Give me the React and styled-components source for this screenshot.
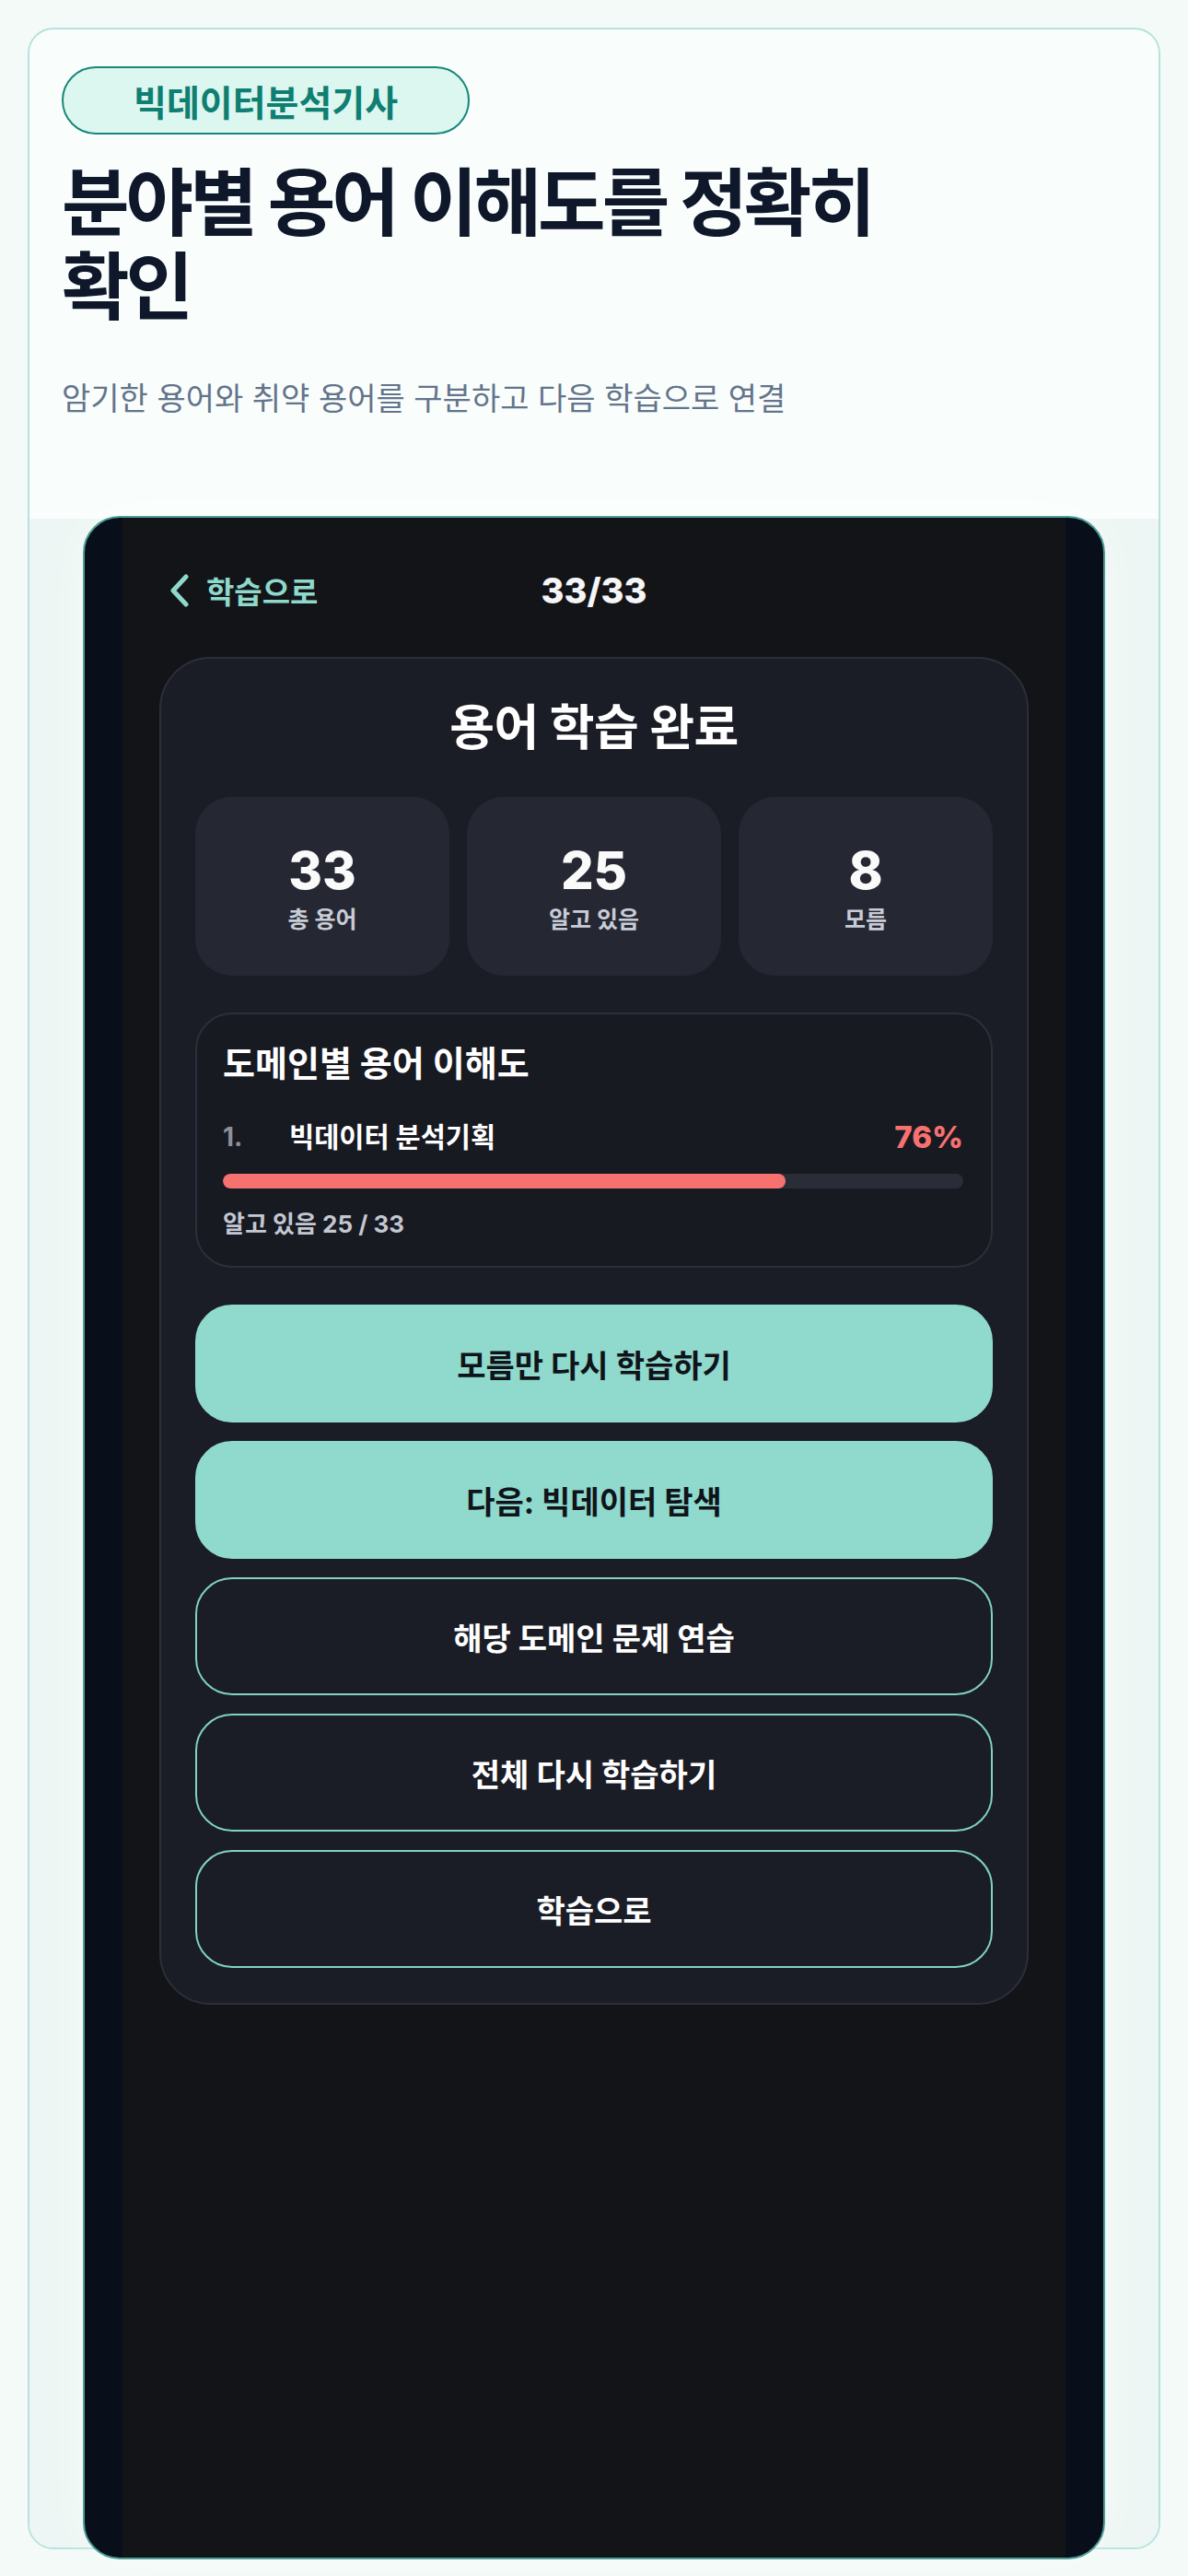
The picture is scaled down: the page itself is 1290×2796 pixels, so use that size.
import React from "react";
import styled, { createGlobalStyle } from "styled-components";

const GlobalStyle = createGlobalStyle`
  * { box-sizing: border-box; }
  html, body { margin: 0; padding: 0; background: #f3faf8; }
  body {
    font-family: Inter, "Noto Sans CJK KR", "Noto Sans", sans-serif;
    -webkit-font-smoothing: antialiased;
  }
`;

const Page = styled.div`
  padding: 30px;
`;

const Card = styled.section`
  border: 2px solid #b7e2dc;
  border-radius: 28px;
  background: #f9fefd;
  display: flex;
  flex-direction: column;
`;

const Hero = styled.header`
  padding: 40px 35px 103px;
`;

const Badge = styled.span`
  display: inline-flex;
  align-items: center;
  height: 74px;
  padding: 0 76px;
  border: 2px solid #16877a;
  border-radius: 999px;
  background: #dcf6f0;
  color: #0e7f71;
  font-size: 39px;
  font-weight: 700;
`;

const Title = styled.h1`
  margin: 28px 0 0;
  max-width: 960px;
  font-size: 80px;
  line-height: 91px;
  letter-spacing: -0.05em;
  font-weight: 700;
  color: #0f172a;
`;

const Subtitle = styled.p`
  margin: 50px 0 0;
  font-size: 34px;
  line-height: 54px;
  color: #64748b;
`;

const Preview = styled.div`
  display: flex;
  flex-direction: column;
  background: #edf6f4;
  border-radius: 0 0 26px 26px;
  padding: 0 58px;
`;

const Phone = styled.div`
  height: 2218px;
  margin: -3px 0 -13px;
  border: 2px solid #4c9e96;
  border-radius: 40px;
  background: #080f1a;
  overflow: hidden;
  display: flex;
  justify-content: center;
  box-shadow: 0 0 60px rgba(255, 255, 255, 0.5);
`;

const Screen = styled.div`
  width: 1024px;
  background: #131418;
  display: flex;
  flex-direction: column;
  padding: 0 40px;
`;

const TopBar = styled.div`
  margin-top: 39px;
  height: 80px;
  padding: 0 10px;
  display: grid;
  grid-template-columns: 1fr auto 1fr;
  align-items: center;
`;

const BackButton = styled.button`
  justify-self: start;
  display: inline-flex;
  align-items: center;
  gap: 17px;
  padding: 0;
  border: 0;
  background: none;
  color: #8ed8cc;
  font-family: inherit;
  font-size: 33px;
  font-weight: 700;
`;

const Counter = styled.div`
  font-size: 38px;
  font-weight: 800;
  color: #f5f5f7;
`;

const Summary = styled.div`
  margin-top: 32px;
  border: 2px solid #2c2f3b;
  border-radius: 56px;
  background: #1b1d26;
  padding: 40px 37px 38px;
  display: flex;
  flex-direction: column;
`;

const SummaryTitle = styled.h2`
  margin: 0;
  text-align: center;
  font-size: 53px;
  line-height: 70px;
  letter-spacing: -0.01em;
  font-weight: 700;
  color: #ffffff;
`;

const Stats = styled.div`
  margin-top: 40px;
  display: grid;
  grid-template-columns: repeat(3, 1fr);
  gap: 19px;
`;

const Stat = styled.div`
  height: 194px;
  border-radius: 40px;
  background: #252833;
  display: flex;
  flex-direction: column;
  align-items: center;
  justify-content: center;
  gap: 4px;
  padding-top: 2px;
`;

const StatValue = styled.div`
  font-size: 56px;
  line-height: 67px;
  font-weight: 800;
  color: #fafafa;
`;

const StatLabel = styled.div`
  font-size: 25px;
  line-height: 31px;
  font-weight: 700;
  color: #c8ccd6;
`;

const Domain = styled.div`
  margin-top: 40px;
  border: 2px solid #2c2f3a;
  border-radius: 40px;
  background: #181a21;
  padding: 28px 30px 28px 28px;
`;

const DomainTitle = styled.h3`
  margin: 0;
  font-size: 38px;
  line-height: 50px;
  font-weight: 700;
  color: #ffffff;
`;

const DomainRow = styled.div`
  margin-top: 36px;
  display: flex;
  align-items: center;
  line-height: 39px;
`;

const Index = styled.span`
  width: 72px;
  font-size: 28px;
  font-weight: 700;
  color: #8b909b;
`;

const DomainName = styled.span`
  flex: 1;
  font-size: 29.5px;
  font-weight: 700;
  color: #ffffff;
`;

const Percent = styled.span`
  font-size: 33px;
  font-weight: 800;
  color: #f87171;
`;

const Track = styled.div`
  margin-top: 20px;
  height: 16px;
  border-radius: 8px;
  background: #2a2d37;
  overflow: hidden;
`;

const Fill = styled.div`
  height: 100%;
  border-radius: 8px;
  background: #f87171;
`;

const Count = styled.div`
  margin-top: 22px;
  font-size: 26px;
  line-height: 34px;
  font-weight: 700;
  color: #c3c7d1;
`;

const Actions = styled.div`
  margin-top: 40px;
  display: flex;
  flex-direction: column;
  gap: 20px;
`;

const ActionButton = styled.button`
  height: 128px;
  border-radius: 40px;
  border: 2px solid ${(p) => (p.$primary ? "#8fd9cd" : "#7fd2c5")};
  background: ${(p) => (p.$primary ? "#8fd9cd" : "transparent")};
  color: ${(p) => (p.$primary ? "#10141a" : "#ffffff")};
  font-family: inherit;
  font-size: 34px;
  font-weight: 700;
`;

const ChevronLeft = () => (
  <svg width="24" height="36" viewBox="0 0 24 36" aria-hidden="true">
    <polyline
      points="19,3 5,18 19,33"
      fill="none"
      stroke="currentColor"
      strokeWidth="5"
      strokeLinecap="round"
      strokeLinejoin="round"
    />
  </svg>
);

const stats = [
  { value: 33, label: "총 용어" },
  { value: 25, label: "알고 있음" },
  { value: 8, label: "모름" },
];

const actions = [
  { label: "모름만 다시 학습하기", primary: true },
  { label: "다음: 빅데이터 탐색", primary: true },
  { label: "해당 도메인 문제 연습" },
  { label: "전체 다시 학습하기" },
  { label: "학습으로" },
];

export default function App() {
  const known = 25;
  const total = 33;
  const pct = Math.round((known / total) * 100);
  return (
    <>
      <GlobalStyle />
      <Page>
        <Card>
          <Hero>
            <Badge>빅데이터분석기사</Badge>
            <Title>분야별 용어 이해도를 정확히 확인</Title>
            <Subtitle>암기한 용어와 취약 용어를 구분하고 다음 학습으로 연결</Subtitle>
          </Hero>
          <Preview>
            <Phone>
              <Screen>
                <TopBar>
                  <BackButton>
                    <ChevronLeft />
                    학습으로
                  </BackButton>
                  <Counter>33/33</Counter>
                  <span />
                </TopBar>
                <Summary>
                  <SummaryTitle>용어 학습 완료</SummaryTitle>
                  <Stats>
                    {stats.map((s) => (
                      <Stat key={s.label}>
                        <StatValue>{s.value}</StatValue>
                        <StatLabel>{s.label}</StatLabel>
                      </Stat>
                    ))}
                  </Stats>
                  <Domain>
                    <DomainTitle>도메인별 용어 이해도</DomainTitle>
                    <DomainRow>
                      <Index>1.</Index>
                      <DomainName>빅데이터 분석기획</DomainName>
                      <Percent>{pct}%</Percent>
                    </DomainRow>
                    <Track>
                      <Fill style={{ width: `${pct}%` }} />
                    </Track>
                    <Count>
                      알고 있음 {known} / {total}
                    </Count>
                  </Domain>
                  <Actions>
                    {actions.map((a) => (
                      <ActionButton key={a.label} $primary={a.primary}>
                        {a.label}
                      </ActionButton>
                    ))}
                  </Actions>
                </Summary>
              </Screen>
            </Phone>
          </Preview>
        </Card>
      </Page>
    </>
  );
}
